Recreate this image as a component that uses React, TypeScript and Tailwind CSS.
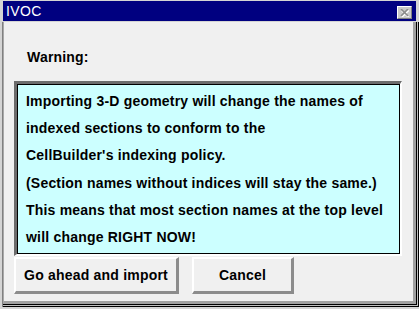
export default function App() {
  const lines = [
    'Importing 3-D geometry will change the names of',
    'indexed sections to conform to the',
    "CellBuilder's indexing policy.",
    '(Section names without indices will stay the same.)',
    'This means that most section names at the top level',
    'will change RIGHT NOW!',
  ]

  return (
    <div
      className="w-[419px] h-[309px] bg-[#d4d4d4] flex flex-col pt-[1px] pl-[2px] pb-[2px] overflow-hidden"
      style={{ fontFamily: '"Liberation Sans", Arial, sans-serif' }}
    >
      {/* title bar */}
      <div className="ml-[1px] mr-[3px] h-[20px] bg-[#000080] flex items-start justify-between">
        <span className="text-white text-[14px] leading-[20px] pl-[3px] tracking-[0.4px]">IVOC</span>
        <div className="mt-[5px] mr-[4px] w-[15px] h-[13px] bg-[#c8c8c8] border-t border-l border-white border-r border-b border-r-[#808080] border-b-[#808080] flex items-center justify-center">
          <svg width="9" height="8" viewBox="0 0 9 8">
            <path d="M1 1 L8 8 M8 1 L1 8" stroke="#ffffff" strokeWidth="1.6" transform="translate(0.6,0.4)" />
            <path d="M1 0 L8 7 M8 0 L1 7" stroke="#8a8a8a" strokeWidth="1.6" />
          </svg>
        </div>
      </div>

      {/* window body */}
      <div className="mt-[1px] flex-1 flex border-l border-l-[#808080]">
        <div className="flex-1 flex border-r border-b border-r-black border-b-black">
          <div className="flex-1 flex border-r border-b border-r-[#c0c0c0] border-b-[#c0c0c0]">
            <div className="flex-1 flex border-r border-b border-r-black border-b-black">
              <div className="flex-1 flex flex-col bg-[#f0f0f0] border-l border-l-[#a8a8a8] border-r-[3px] border-b-[3px] border-r-[#a0a0a0] border-b-[#a0a0a0]">
                <div className="pl-[23px] pt-[27px] h-[59px] text-[14px] leading-[16px] font-bold text-black tracking-[0.2px]">
                  Warning:
                </div>

                <div className="ml-[10px] w-[388px] h-[175px] border-t-[3px] border-l-[3px] border-t-[#6c6c6c] border-l-[#6c6c6c] border-r-2 border-b-2 border-r-white border-b-white">
                  <div className="w-full h-full border border-black bg-[#ccffff] pl-[8px] pt-[3px]">
                    {lines.map((l) => (
                      <div key={l} className="text-[14px] leading-[27.2px] font-bold text-black whitespace-nowrap tracking-[0.2px]">
                        {l}
                      </div>
                    ))}
                  </div>
                </div>

                <div className="mt-[1px] ml-[10px] flex gap-[13px]">
                  <button className="w-[165px] h-[37px] bg-[#f0f0f0] border-t-2 border-l-2 border-t-white border-l-white border-r-[3px] border-b-[3px] border-r-[#8c8c8c] border-b-[#8c8c8c] text-[14px] font-bold text-black tracking-[0.2px]">
                    Go ahead and import
                  </button>
                  <button className="w-[102px] h-[37px] bg-[#f0f0f0] border-t-2 border-l-2 border-t-white border-l-white border-r-[3px] border-b-[3px] border-r-[#8c8c8c] border-b-[#8c8c8c] text-[14px] font-bold text-black tracking-[0.2px]">
                    Cancel
                  </button>
                </div>
              </div>
            </div>
          </div>
        </div>
      </div>
    </div>
  )
}
